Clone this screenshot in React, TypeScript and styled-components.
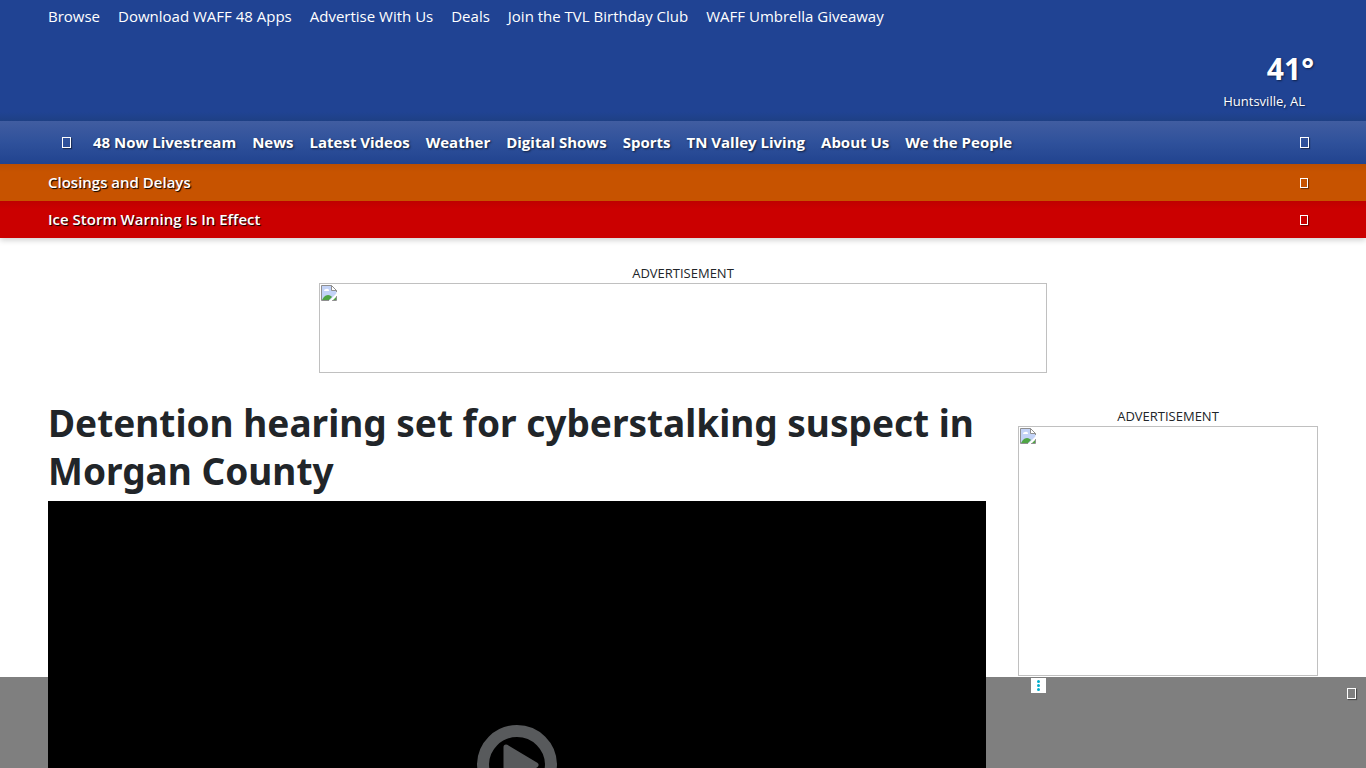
import React from "react";
import styled, { createGlobalStyle } from "styled-components";

const GlobalStyle = createGlobalStyle`
  * { box-sizing: border-box; }
  html { scrollbar-width: none; }
  body {
    margin: 0;
    background: #fff;
    color: #212529;
    font-family: "Segoe UI", "Open Sans", "Noto Sans", sans-serif;
    font-size: 15px;
    line-height: 24px;
  }
`;

const Header = styled.header`
  position: relative;
  color: #fff;
  box-shadow: 0 2px 6px rgba(0, 0, 0, 0.2);
`;

const Masthead = styled.div`
  display: flex;
  flex-direction: column;
  justify-content: space-between;
  min-height: 121px;
  padding: 4px 48px 8px;
  background: linear-gradient(#204393 0 112px, #1e4085 121px);
`;

const LinkList = styled.ul<{ $gap: number }>`
  display: flex;
  gap: ${(p) => p.$gap}px;
  margin: 0;
  padding: 0;
  list-style: none;
  white-space: nowrap;
`;

const TextLink = styled.a`
  color: #fff;
  text-decoration: none;
`;

const Weather = styled.a`
  display: flex;
  flex-direction: column;
  align-items: flex-end;
  align-self: flex-end;
  color: #fff;
  text-decoration: none;
  text-shadow: 1px 1px 2px rgba(0, 0, 0, 0.5);
`;

const Temperature = styled.strong`
  padding-right: 4px;
  font-size: 30px;
  line-height: 40px;
`;

const Place = styled.span`
  padding-right: 13px;
  font-size: 13px;
  line-height: 24px;
`;

const NavBar = styled.nav`
  display: flex;
  align-items: center;
  height: 43px;
  padding: 0 44px 0 48px;
  background: linear-gradient(#415da1, #2f519b 50%, #21438f);
  font-weight: 700;
  text-shadow: 1px 1px 2px rgba(0, 0, 0, 0.6);
`;

const IconButton = styled.button`
  display: flex;
  align-items: center;
  justify-content: center;
  width: 36px;
  height: 32px;
  padding: 0;
  border: 0;
  background: none;
  color: #fff;
`;

const NavLinks = styled.div`
  flex: 1;
  padding: 0 0 2px 9px;
`;

const Glyph = styled.span<{ $small?: boolean }>`
  width: ${(p) => (p.$small ? 8 : 9)}px;
  height: ${(p) => (p.$small ? 10 : 11)}px;
  border: 1px solid currentColor;
  box-shadow: 1px 1px 1px rgba(0, 0, 0, 0.4);
`;

const Alert = styled.div<{ $color: string }>`
  display: flex;
  align-items: center;
  justify-content: space-between;
  height: 37px;
  padding: 0 44px 0 48px;
  background: linear-gradient(rgba(0, 0, 0, 0.06), transparent 8px) ${(p) => p.$color};
`;

const AlertLink = styled(TextLink)`
  padding-bottom: 2px;
  font-weight: 600;
  text-shadow: 1px 1px 1px #000;
`;

const AdSlot = styled.aside`
  display: flex;
  flex-direction: column;
  align-items: center;
`;

const AdLabel = styled.span`
  font-size: 13px;
  line-height: 20px;
`;

const AdFrame = styled.div<{ $width: number; $height: number }>`
  width: ${(p) => p.$width}px;
  height: ${(p) => p.$height}px;
  max-width: 100%;
  padding: 1px;
  border: 1px solid #c0c0c0;
`;

const Page = styled.main`
  padding: 25px 48px 0;
`;

const Columns = styled.div`
  display: grid;
  grid-template-columns: minmax(0, 1fr) 300px;
  gap: 32px;
  padding-top: 26px;
`;

const Headline = styled.h1`
  margin: 0 0 6px;
  font-family: "Segoe UI", "Noto Sans", "Open Sans", sans-serif;
  font-size: 37px;
  font-weight: 700;
  line-height: 48px;
`;

const Sidebar = styled.div`
  padding-top: 7px;
`;

const Player = styled.div`
  display: flex;
  align-items: center;
  justify-content: center;
  aspect-ratio: 16 / 9;
  background: #000;
`;

const PlayButton = styled.button`
  width: 80px;
  height: 80px;
  padding: 0;
  border: 0;
  background: none;
`;

const StickyAd = styled.div`
  position: fixed;
  right: 0;
  bottom: 0;
  left: 0;
  display: grid;
  grid-template-columns: 1fr minmax(0, 728px) 1fr;
  align-items: start;
  height: 91px;
  background: rgba(0, 0, 0, 0.5);
`;

const StickySlot = styled.div`
  grid-column: 2;
  display: flex;
  justify-content: flex-end;
  padding: 1px 1px 0 0;
`;

const AdOptions = styled.button`
  display: flex;
  width: 15px;
  height: 15px;
  padding: 0;
  border: 0;
  background: #fff;
`;

const CloseSlot = styled.div`
  display: flex;
  justify-content: flex-end;
`;

const CloseButton = styled(IconButton)`
  width: 30px;
`;

const topLinks = [
  "Browse",
  "Download WAFF 48 Apps",
  "Advertise With Us",
  "Deals",
  "Join the TVL Birthday Club",
  "WAFF Umbrella Giveaway",
];

const navLinks = [
  "48 Now Livestream",
  "News",
  "Latest Videos",
  "Weather",
  "Digital Shows",
  "Sports",
  "TN Valley Living",
  "About Us",
  "We the People",
];

function Links({ items, gap }: { items: string[]; gap: number }) {
  return (
    <LinkList $gap={gap}>
      {items.map((item) => (
        <li key={item}>
          <TextLink href="#">{item}</TextLink>
        </li>
      ))}
    </LinkList>
  );
}

function BrokenImage() {
  return (
    <svg width="16" height="16" viewBox="0 0 16 16" display="block" aria-hidden="true">
      <path d="M.5.5H10.500L15.500 5.500V9L9 15.500H.5Z" fill="#c3d3f7" />
      <path d="M3 6a2 2 0 0 1 2-2 2 2 0 0 1 3 2Z" fill="#fff" />
      <path d="M1 15c1-2 3-5 6-5 2 0 3 1 4 2L8 15Z" fill="#4fa544" />
      <path d="M.5 15.500V.5H10.500L15.500 5.500V7M.5 15.500H8M11 15.500h4.500V11" fill="none" stroke="#8f8f8f" />
      <path d="M10.500.5V5.500H15.500Z" fill="#fff" stroke="#8f8f8f" />
      <path d="M12 15l3-3v3Z" fill="#4fa544" />
      <path d="M8 16l8-8v2.500L10.500 16Z" fill="#fff" />
    </svg>
  );
}

function Advertisement({ width, height }: { width: number; height: number }) {
  return (
    <AdSlot>
      <AdLabel>ADVERTISEMENT</AdLabel>
      <AdFrame $width={width} $height={height}>
        <BrokenImage />
      </AdFrame>
    </AdSlot>
  );
}

export default function App() {
  return (
    <>
      <GlobalStyle />
      <Header>
        <Masthead>
          <Links items={topLinks} gap={18} />
          <Weather href="#">
            <Temperature>41°</Temperature>
            <Place>Huntsville, AL</Place>
          </Weather>
        </Masthead>
        <NavBar>
          <IconButton aria-label="Menu">
            <Glyph />
          </IconButton>
          <NavLinks>
            <Links items={navLinks} gap={16} />
          </NavLinks>
          <IconButton aria-label="Search">
            <Glyph />
          </IconButton>
        </NavBar>
        <Alert $color="#c75300">
          <AlertLink href="#">Closings and Delays</AlertLink>
          <IconButton aria-label="Dismiss closings">
            <Glyph $small />
          </IconButton>
        </Alert>
        <Alert $color="#cb0000">
          <AlertLink href="#">Ice Storm Warning Is In Effect</AlertLink>
          <IconButton aria-label="Dismiss warning">
            <Glyph $small />
          </IconButton>
        </Alert>
      </Header>
      <Page>
        <Advertisement width={728} height={90} />
        <Columns>
          <article>
            <Headline>Detention hearing set for cyberstalking suspect in Morgan County</Headline>
            <Player>
              <PlayButton aria-label="Play video">
                <svg width="80" height="80" viewBox="0 0 80 80" display="block">
                  <circle cx="40" cy="40" r="34" fill="none" stroke="#b0b4b8" strokeWidth="12" />
                  <path
                    d="M29 22L59 40L29 58Z"
                    fill="#b0b4b8"
                    stroke="#b0b4b8"
                    strokeWidth="5"
                    strokeLinejoin="round"
                  />
                </svg>
              </PlayButton>
            </Player>
          </article>
          <Sidebar>
            <Advertisement width={300} height={250} />
          </Sidebar>
        </Columns>
      </Page>
      <StickyAd>
        <StickySlot>
          <AdOptions aria-label="Ad options">
            <svg width="15" height="15" viewBox="0 0 15 15">
              <circle cx="7.500" cy="3.500" r="1.500" fill="#00aecd" />
              <circle cx="7.500" cy="7.500" r="1.500" fill="#00aecd" />
              <circle cx="7.500" cy="11.500" r="1.500" fill="#00aecd" />
            </svg>
          </AdOptions>
        </StickySlot>
        <CloseSlot>
          <CloseButton aria-label="Close advertisement">
            <Glyph />
          </CloseButton>
        </CloseSlot>
      </StickyAd>
    </>
  );
}
